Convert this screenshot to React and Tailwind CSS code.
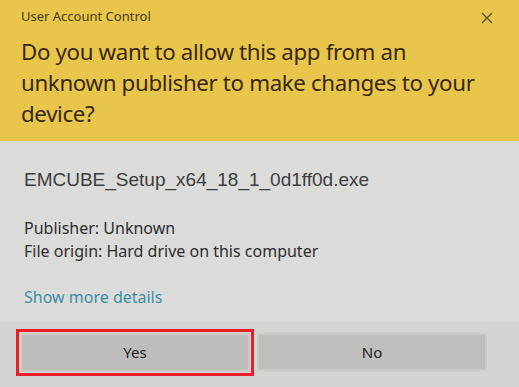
export default function App() {
  return (
    <div className="w-[519px] h-[387px] bg-[#dbdbda] flex flex-col font-['Noto_Sans','Open_Sans',sans-serif] overflow-hidden">
      {/* Yellow header */}
      <div className="h-[141px] bg-[#e8c64b] px-[21px] pt-[8px] shrink-0">
        <div className="flex items-center justify-between h-[18px]">
          <span className="text-[13px] text-[#4a3915]">User Account Control</span>
          <svg width="12" height="12" viewBox="0 0 12 12" className="mr-[5px] mt-[2px]">
            <path d="M1 1L11 11M11 1L1 11" stroke="#5a4a22" strokeWidth="1.3" fill="none" />
          </svg>
        </div>
        <h1 className="mt-[10px] text-[22.3px] leading-[31px] text-[#3a2812] font-normal tracking-[-0.35px]">
          Do you want to allow this app from an unknown publisher to make changes to your device?
        </h1>
      </div>

      {/* Details */}
      <div className="flex-1 px-[24px] pt-[27px]">
        <div className="text-[19px] leading-[24px] text-[#3e3e3e] font-['Liberation_Sans',sans-serif]">
          EMCUBE_Setup_x64_18_1_0d1ff0d.exe
        </div>
        <div className="mt-[25px] text-[16px] leading-[23px] text-[#2e2e2e]">
          <div>Publisher: Unknown</div>
          <div>File origin: Hard drive on this computer</div>
        </div>
        <div className="mt-[24px] text-[16px] leading-[20px] text-[#3d8ea3]">Show more details</div>
      </div>

      {/* Buttons */}
      <div className="h-[65px] bg-[#d4d4d3] shrink-0 flex gap-[7px] pl-[20px] pt-[11px]">
        <button className="w-[230px] h-[39px] bg-[#bdbdbc] border-2 border-[#cbcbca] text-[15px] text-[#222] outline-[3px] outline-solid outline-[#e8202a] outline-offset-[1px]">
          Yes
        </button>
        <button className="w-[230px] h-[38px] bg-[#bebebd] border-2 border-[#cacac9] text-[15px] text-[#222]">
          No
        </button>
      </div>
    </div>
  );
}
